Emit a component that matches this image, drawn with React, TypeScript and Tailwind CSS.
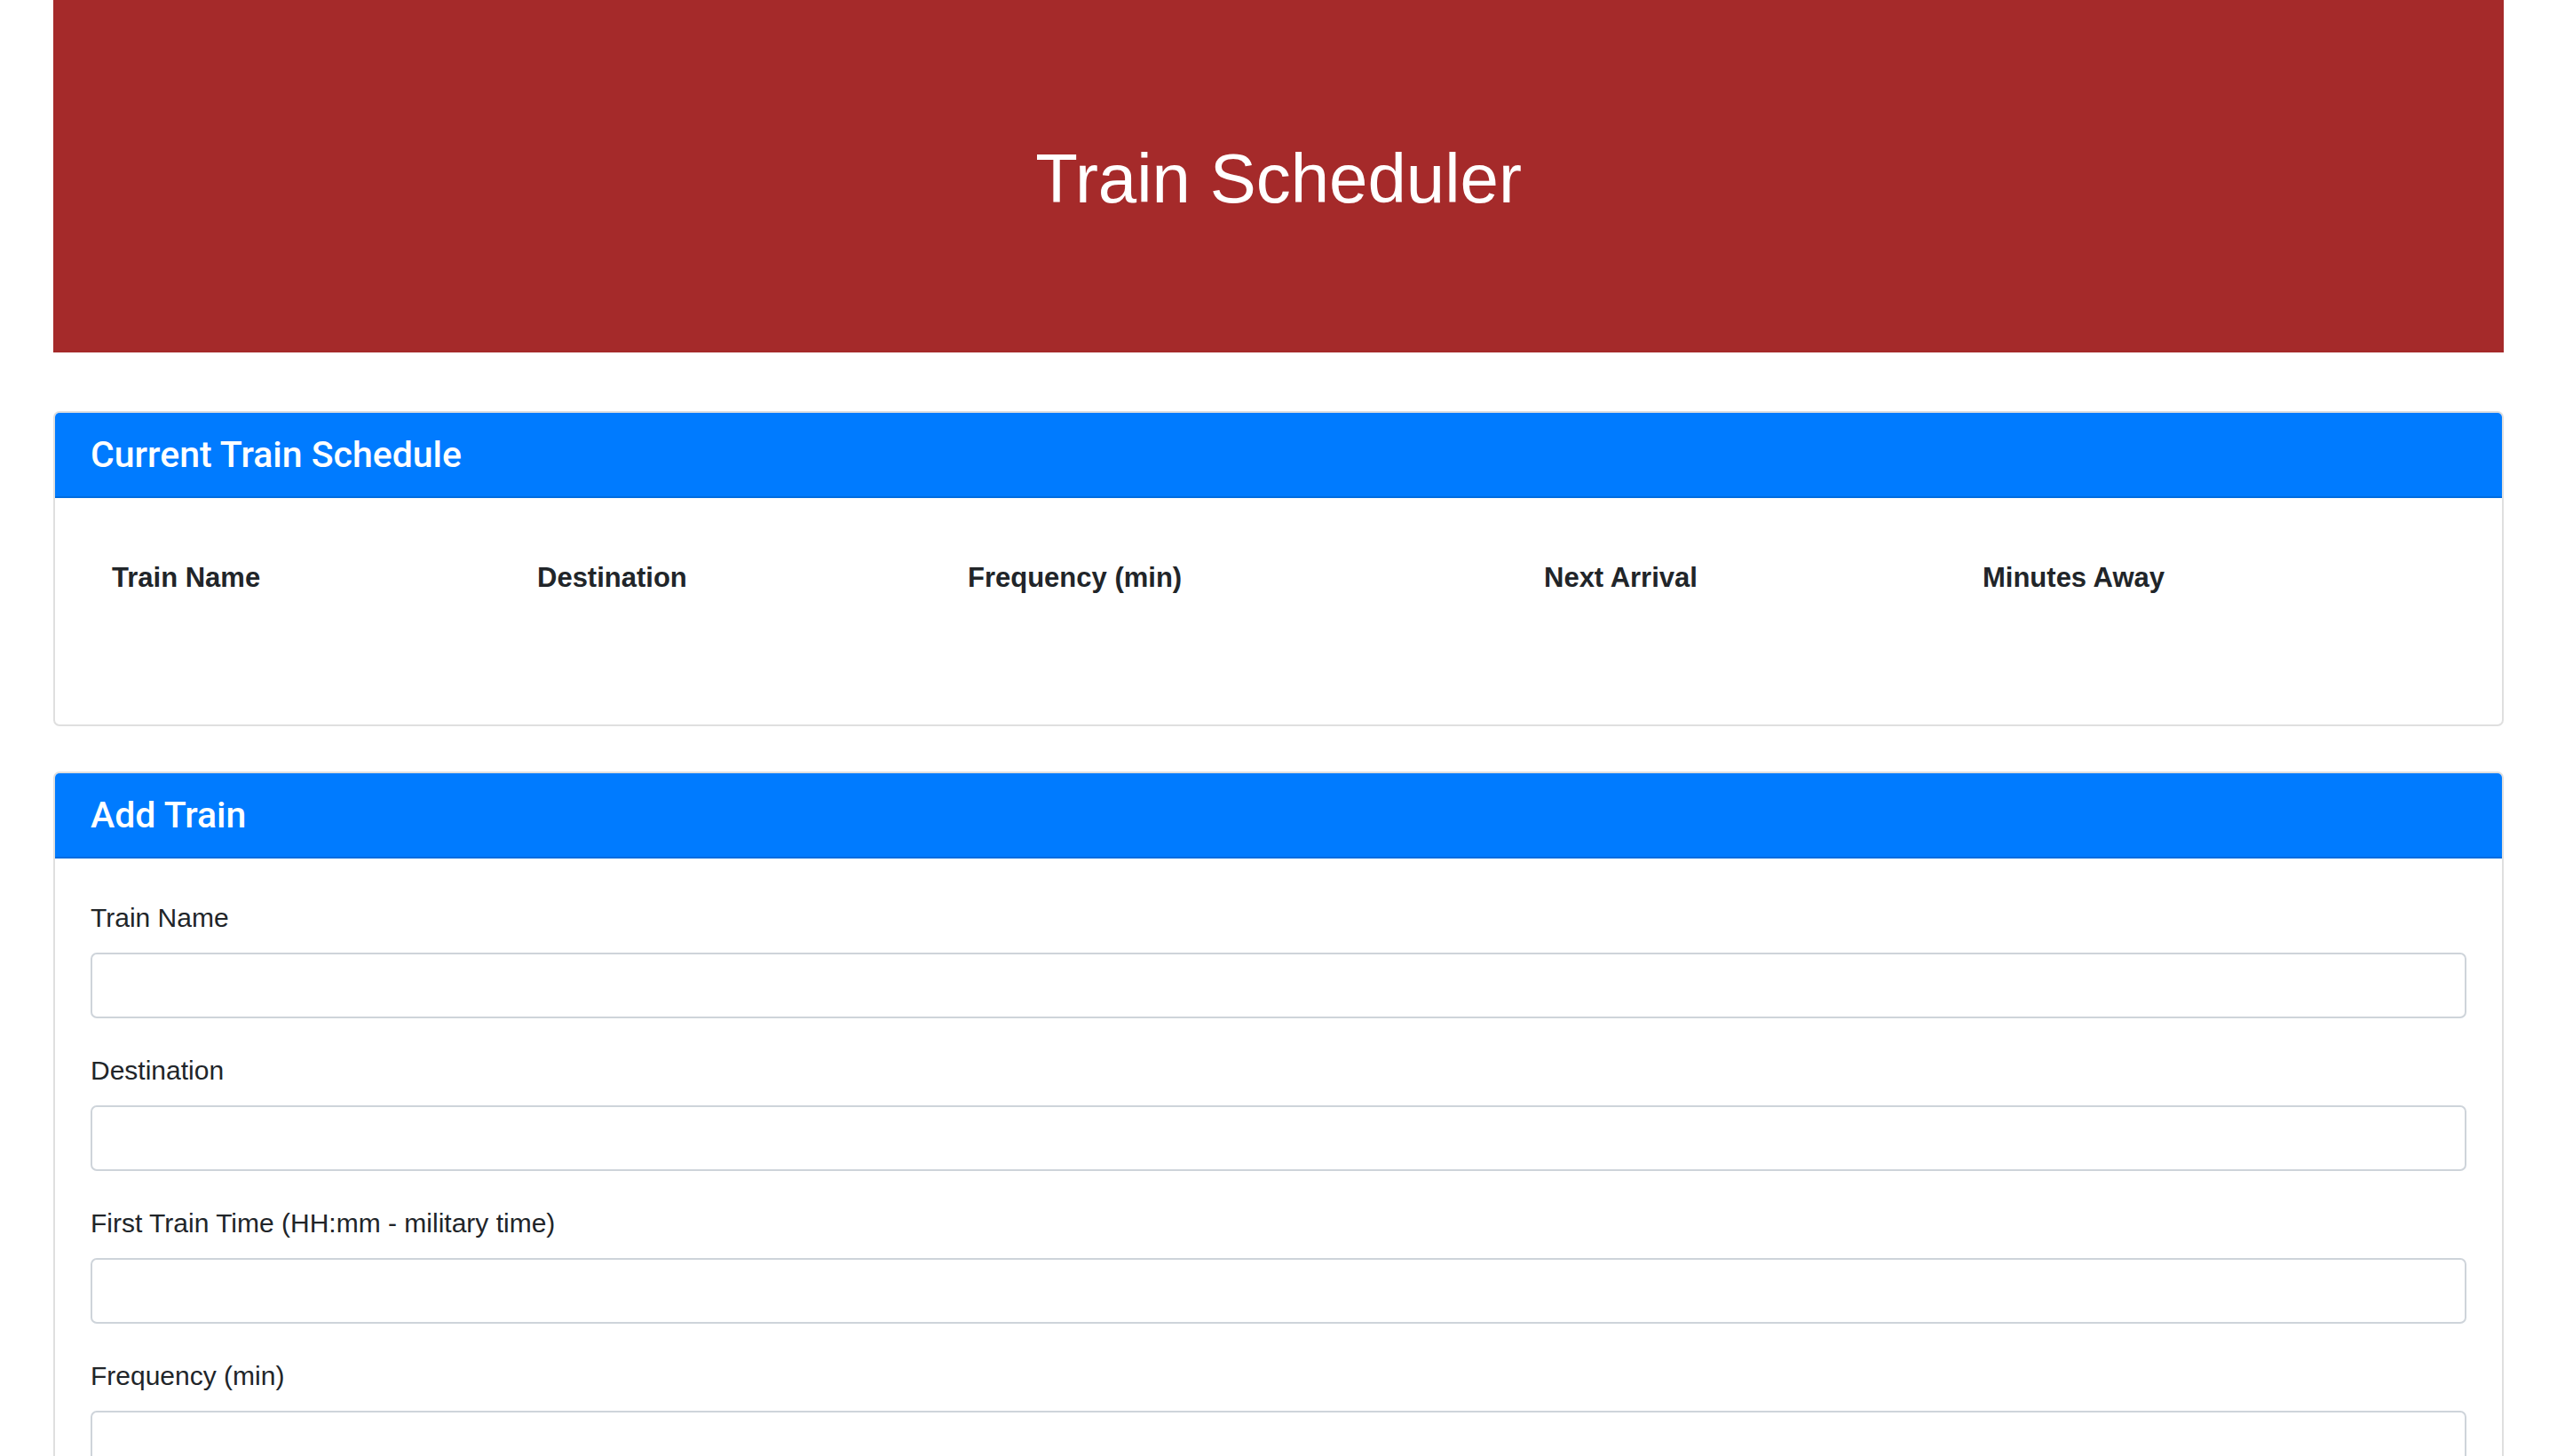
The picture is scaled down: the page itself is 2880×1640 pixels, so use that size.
export default function App() {
  const fields = [
    'Train Name',
    'Destination',
    'First Train Time (HH:mm - military time)',
    'Frequency (min)',
  ];

  return (
    <div className="min-h-screen bg-white px-[60px] pb-[80px] font-['Liberation_Sans',Arial,sans-serif] text-[#212529]">
      <header className="bg-[#a52a2a] pt-[154px] pb-[149px] text-center">
        <h1 className="text-[78px] leading-[94px] font-normal text-white">Train Scheduler</h1>
      </header>

      <section className="mt-[66px] overflow-hidden rounded-[7px] border-2 border-[#dfdfdf]">
        <div className="border-b-2 border-[#006cdf] bg-[#007bff] pl-[40px] font-['Roboto',Arial,sans-serif] text-[41px] leading-[94px] font-medium text-white">
          Current Train Schedule
        </div>
        <div className="h-[255px] pt-[67px] pl-[64px]">
          <div className="grid grid-cols-[479px_485px_649px_494px_1fr] text-[31px] leading-[46px] font-bold">
            <span>Train Name</span>
            <span>Destination</span>
            <span>Frequency (min)</span>
            <span>Next Arrival</span>
            <span>Minutes Away</span>
          </div>
        </div>
      </section>

      <section className="mt-[51px] overflow-hidden rounded-[7px] border-2 border-[#dfdfdf]">
        <div className="border-b-2 border-[#006cdf] bg-[#007bff] pl-[40px] font-['Roboto',Arial,sans-serif] text-[41px] leading-[94px] font-medium text-white">
          Add Train
        </div>
        <form className="px-[40px] pt-[44px] pb-[40px]">
          {fields.map((f) => (
            <div key={f} className="mb-[36px]">
              <label className="mb-[16px] block text-[30px] leading-[46px]">{f}</label>
              <input
                type="text"
                className="block h-[74px] w-full rounded-[7px] border-2 border-[#ced4da] bg-white px-[22px] text-[30px] outline-none"
              />
            </div>
          ))}
          <button
            type="button"
            className="rounded-[7px] bg-[#007bff] px-[22px] py-[11px] text-[30px] leading-[46px] text-white"
          >
            Submit
          </button>
        </form>
      </section>
    </div>
  );
}
